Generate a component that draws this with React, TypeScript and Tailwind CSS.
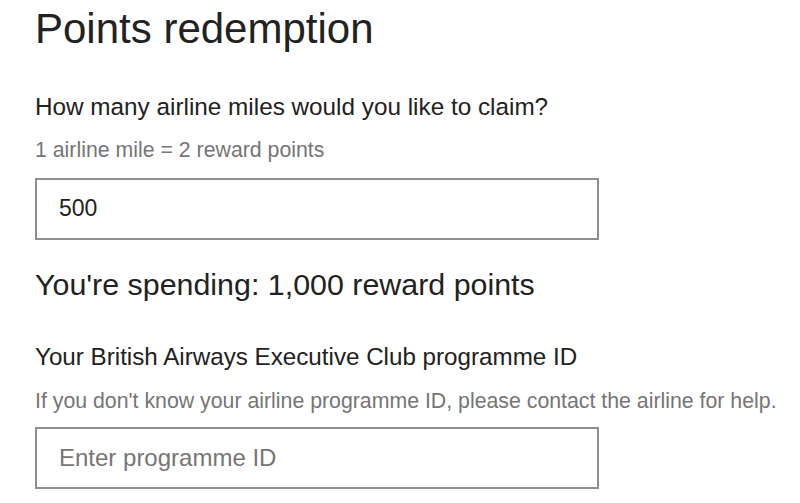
export default function App() {
  return (
    <div className="min-h-screen bg-white pl-[35px] pt-[8px] font-['Liberation_Sans',Arial,sans-serif] leading-none text-[#222]">
      <h1 className="text-[42px] leading-none">Points redemption</h1>

      <p className="mt-[45px] text-[24.3px] leading-none">How many airline miles would you like to claim?</p>
      <p className="mt-[21px] text-[21.3px] leading-none text-[#767676]">1 airline mile = 2 reward points</p>
      <input
        type="text"
        defaultValue="500"
        className="mt-[16px] block h-[62px] w-[564px] border-2 border-[#8f8f8f] px-[22px] text-[23px] text-[#222] outline-none"
      />

      <p className="mt-[29px] text-[30.4px] leading-none">You're spending: 1,000 reward points</p>

      <p className="mt-[46px] text-[24.2px] leading-none">Your British Airways Executive Club programme ID</p>
      <p className="mt-[22px] text-[21.3px] leading-none text-[#767676]">
        If you don't know your airline programme ID, please contact the airline for help.
      </p>
      <input
        type="text"
        placeholder="Enter programme ID"
        className="mt-[14px] block h-[62px] w-[564px] border-2 border-[#8f8f8f] px-[22px] text-[24px] text-[#222] outline-none placeholder:text-[#767676]"
      />
    </div>
  )
}
